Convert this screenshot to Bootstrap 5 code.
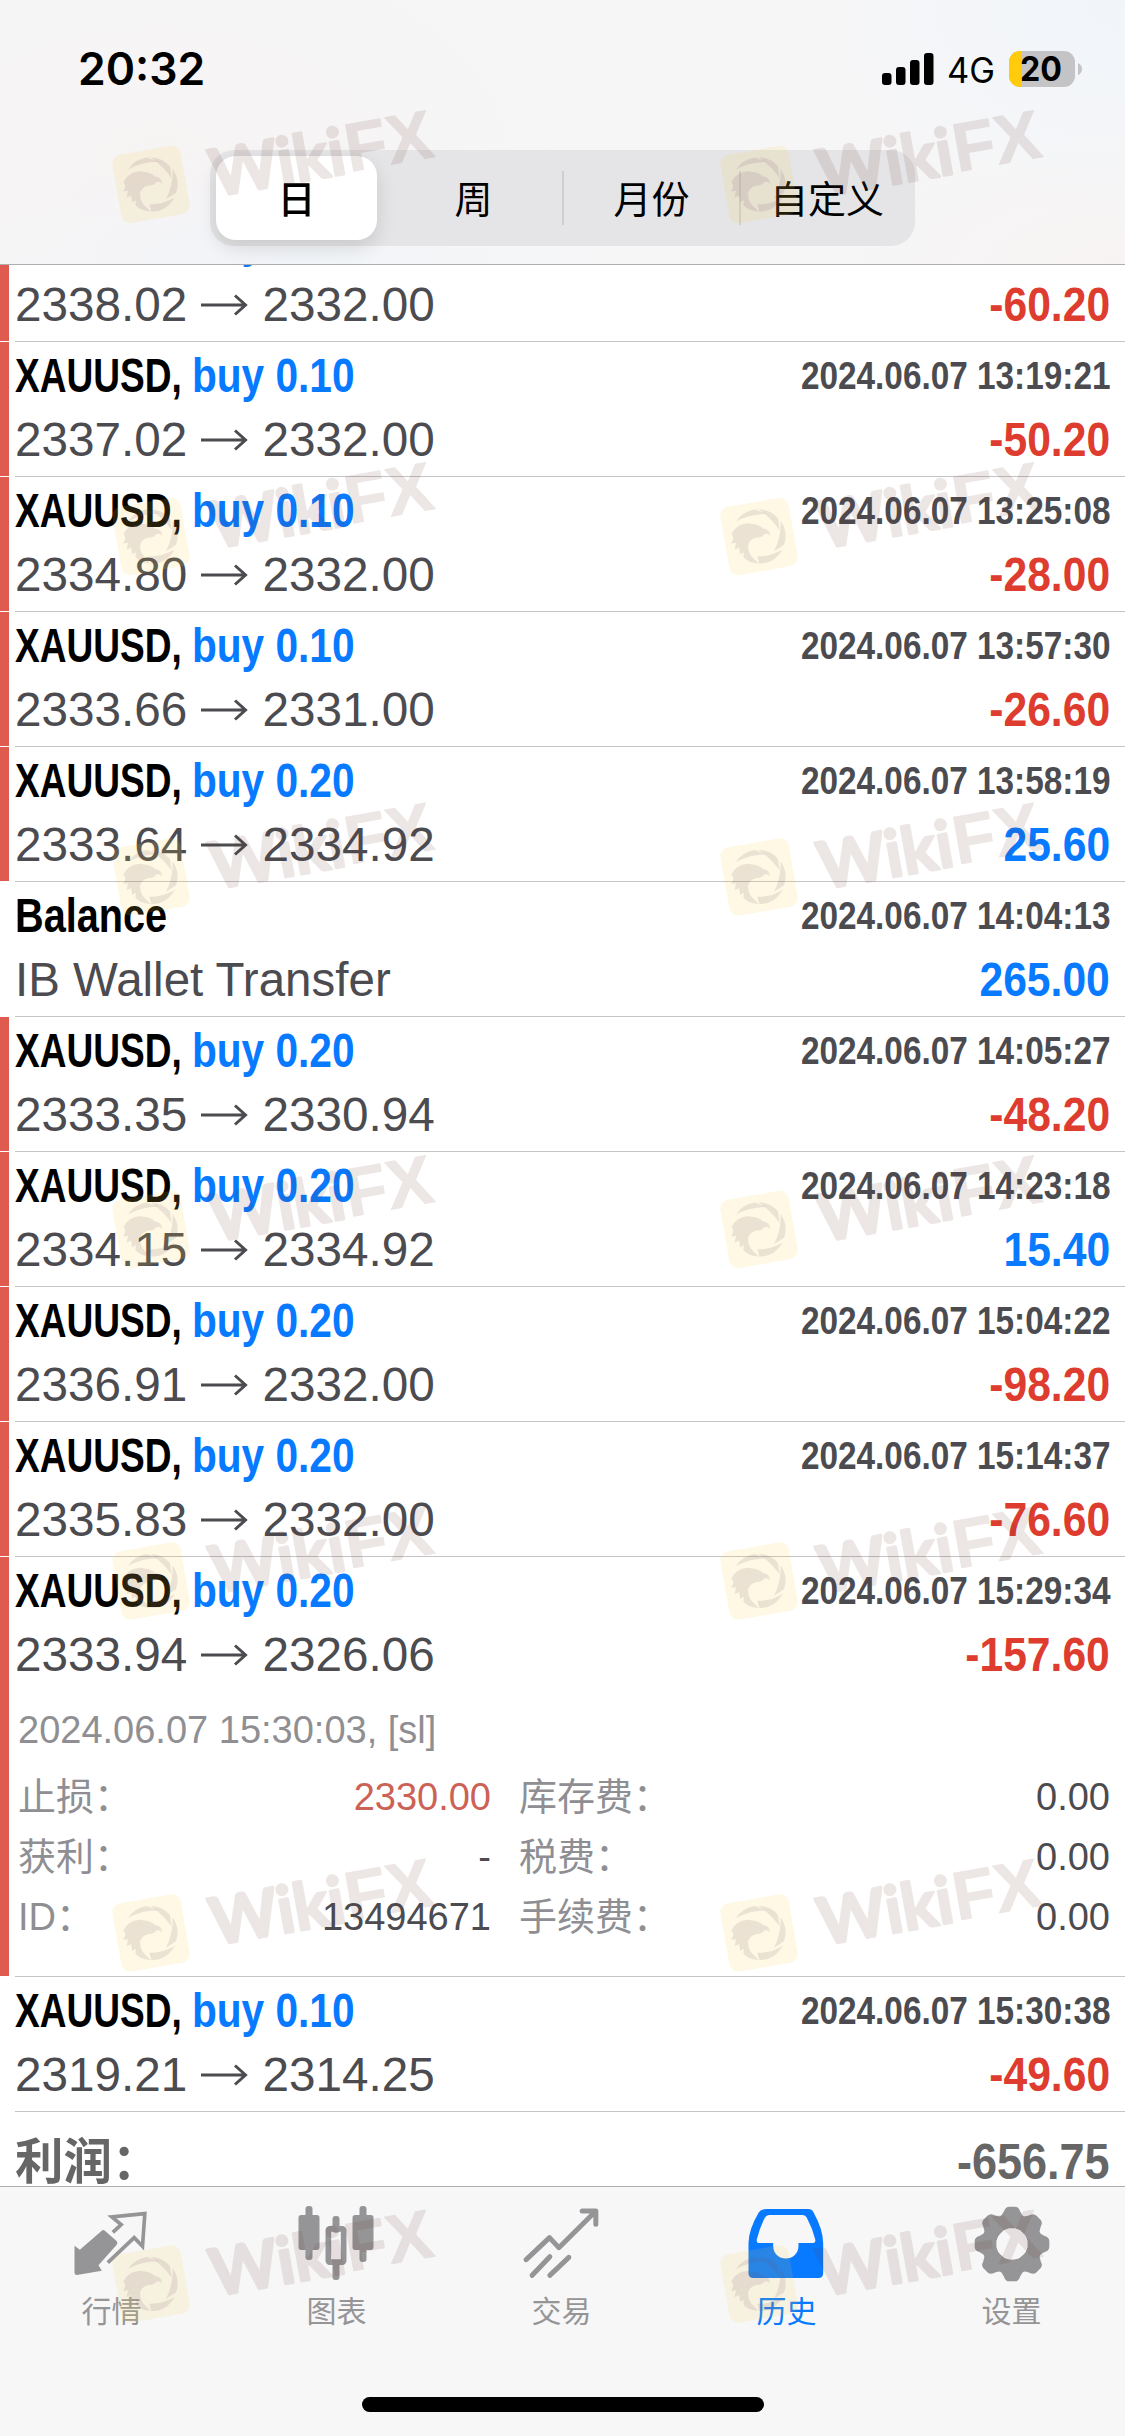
<!DOCTYPE html>
<html lang="zh-CN">
<head>
<meta charset="utf-8">
<meta name="viewport" content="width=device-width, initial-scale=1">
<title>历史</title>
<link href="https://cdn.jsdelivr.net/npm/bootstrap@5.3.0/dist/css/bootstrap.min.css" rel="stylesheet">
<style>
  body{width:1125px;height:2436px;overflow:hidden;background:#fff;color:#4b4b50;font-family:"Liberation Sans","Noto Sans CJK SC",sans-serif}
  .screen{height:2436px}
  .topbar{height:265px;border-bottom:1px solid #aeaeb2;background:
    radial-gradient(300px 220px at 100% 0,rgba(240,245,251,.8),rgba(240,245,251,0)),
    radial-gradient(320px 120px at 26% 100%,rgba(241,245,250,.8),rgba(241,245,250,0)),
    radial-gradient(400px 240px at 14% 60%,rgba(247,243,243,.8),rgba(247,243,243,0)),
    radial-gradient(300px 130px at 100% 100%,rgba(248,243,242,.8),rgba(248,243,242,0)),#f6f6f7}
  .statusbar{height:150px;padding:39px 41px 0 78px}
  .statusbar,.statusbar svg text{font-family:Inter,sans-serif;color:#000}
  .clock{font-size:44.5px;font-weight:600;line-height:60px}
  .seg{width:705px;height:96px;border-radius:24px;background:#e5e5e7;padding:6px 0 6px 6px;margin-left:210px}
  .seg .nav-link{padding:0;color:#000;font:400 38px/81px "Noto Sans CJK SC",sans-serif;text-align:center;height:84px}
  .seg .nav-link.active{background:#fff;color:#000;font-weight:500;border-radius:20px;box-shadow:0 8px 20px rgba(0,0,0,.12)}
  .seg .rule{width:2px;height:54px;background:#cfcfd3}
  .deals{height:1921px;overflow:hidden}
  .deal{height:135px;position:relative;padding:4px 15px 0 15px;flex:none}
  .deal::after{content:"";position:absolute;left:15px;right:0;bottom:0;height:1px;background:#c4c4c7}
  .deal.hit::before{content:"";position:absolute;left:0;top:0;bottom:1px;width:9px;background:#df5b50}
  .deal.open-row{height:420px}
  .first{margin-top:-58px}
  .l1{height:62px;font-weight:700;line-height:60px}
  .l2{height:63px;line-height:63px;font-size:47.7px}
  .sx{display:inline-block;white-space:nowrap;transform-origin:0 50%}
  .sym{width:177px;color:#000;font-size:47.5px}
  .sym .sx{transform:scaleX(.78)}
  .buy{color:#087aff;font-size:47.5px;transform:scaleX(.855)}
  .bal{color:#000;font-size:47.5px;transform:scaleX(.835)}
  .when{font-size:38.5px;line-height:59px;transform:scaleX(.866);transform-origin:100% 50%}
  .amt{font-weight:700;font-size:48px;color:#dd3c2e;transform:scaleX(.888);transform-origin:100% 50%}
  .amt.up{color:#087aff}
  .arrow{width:48px;height:26px;margin:0 14px 0 13px}
  .ibt{font-size:47.5px}
  .detail{font-size:38px;color:#8f8f93;padding-top:18px}
  .detail .stamp{height:52px;line-height:52px;padding-left:3px}
  .grid{padding-top:11px;margin-left:3px}
  .grid>div{height:60px;line-height:60px}
  .gl{width:473px;margin-right:28px}
  .dk{color:#4b4b50}.rd{color:#cc6156}
  .total{height:74px;padding:0 15px;font-weight:700;color:#666;font-size:50px;line-height:100px}
  .total .lab{font:700 48.5px/92px "Noto Sans CJK SC",sans-serif}
  .total .sum{transform:scaleX(.9);transform-origin:100% 50%}
  .tabs{height:250px;border-top:1px solid #adadb0;background:#f7f7f8}
  .tabs .nav-link{width:225px;padding:18px 2px 0 0;color:#959597;font:400 30px/46px "Noto Sans CJK SC",sans-serif}
  .tabs .nav-link.on{color:#087aff}
  .tabs svg{width:78px;height:78px;margin-bottom:3px}
  .homebar{width:402px;height:15px;border-radius:8px;background:#000;margin:65px auto 0}
  .wm{left:0;top:0;pointer-events:none}
</style>
</head>
<body>
<svg width="0" height="0" class="position-absolute">
  <symbol id="ar" viewBox="0 0 48 26"><path d="M1 13H46M35 3.500L45.500 13L35 22.500" fill="none" stroke="#4b4b50" stroke-width="3"/></symbol>
</svg>
<div class="screen d-flex flex-column position-relative">
  <header class="topbar flex-shrink-0">
    <div class="statusbar d-flex justify-content-between align-items-start">
      <span class="clock">20:32</span>
      <svg width="206" height="60" viewBox="0 0 206 60">
        <g><rect x="4" y="34" width="9.500" height="12" rx="3"/><rect x="18" y="28" width="9.500" height="18" rx="3"/><rect x="32" y="21" width="9.500" height="25" rx="3"/><rect x="46" y="14" width="9.500" height="32" rx="3"/></g>
        <text x="69" y="44" font-size="35" textLength="48" lengthAdjust="spacingAndGlyphs">4G</text>
        <clipPath id="bat"><rect x="131" y="12" width="66" height="36" rx="11"/></clipPath>
        <g clip-path="url(#bat)"><rect x="131" y="12" width="66" height="36" fill="#c4c4c6"/><rect x="131" y="12" width="13" height="36" fill="#ffcb0a"/></g>
        <path d="M200 24Q204 26 204 30Q204 34 200 36Z" fill="#c4c4c6"/>
        <text x="142" y="42" font-size="33.500" font-weight="700" textLength="42" lengthAdjust="spacingAndGlyphs">20</text>
      </svg>
    </div>
    <nav class="seg nav d-flex align-items-center">
      <a class="nav-link active" style="width:161px">日</a>
      <a class="nav-link" style="width:185px;padding-left:8px">周</a>
      <span class="rule"></span>
      <a class="nav-link" style="width:175px">月份</a>
      <span class="rule"></span>
      <a class="nav-link" style="width:172px">自定义</a>
    </nav>
  </header>

  <main class="deals d-flex flex-column flex-shrink-0">
    <div class="deal hit first">
      <div class="l1 d-flex"><span class="sym"><span class="sx">XAUUSD,</span></span><span class="sx buy">buy 0.10</span></div>
      <div class="l2 d-flex align-items-center"><span>2338.02</span><svg class="arrow"><use href="#ar"/></svg><span>2332.00</span><span class="sx amt ms-auto">-60.20</span></div>
    </div>
    <div class="deal hit">
      <div class="l1 d-flex"><span class="sym"><span class="sx">XAUUSD,</span></span><span class="sx buy">buy 0.10</span><span class="sx when ms-auto">2024.06.07 13:19:21</span></div>
      <div class="l2 d-flex align-items-center"><span>2337.02</span><svg class="arrow"><use href="#ar"/></svg><span>2332.00</span><span class="sx amt ms-auto">-50.20</span></div>
    </div>
    <div class="deal hit">
      <div class="l1 d-flex"><span class="sym"><span class="sx">XAUUSD,</span></span><span class="sx buy">buy 0.10</span><span class="sx when ms-auto">2024.06.07 13:25:08</span></div>
      <div class="l2 d-flex align-items-center"><span>2334.80</span><svg class="arrow"><use href="#ar"/></svg><span>2332.00</span><span class="sx amt ms-auto">-28.00</span></div>
    </div>
    <div class="deal hit">
      <div class="l1 d-flex"><span class="sym"><span class="sx">XAUUSD,</span></span><span class="sx buy">buy 0.10</span><span class="sx when ms-auto">2024.06.07 13:57:30</span></div>
      <div class="l2 d-flex align-items-center"><span>2333.66</span><svg class="arrow"><use href="#ar"/></svg><span>2331.00</span><span class="sx amt ms-auto">-26.60</span></div>
    </div>
    <div class="deal hit">
      <div class="l1 d-flex"><span class="sym"><span class="sx">XAUUSD,</span></span><span class="sx buy">buy 0.20</span><span class="sx when ms-auto">2024.06.07 13:58:19</span></div>
      <div class="l2 d-flex align-items-center"><span>2333.64</span><svg class="arrow"><use href="#ar"/></svg><span>2334.92</span><span class="sx amt up ms-auto">25.60</span></div>
    </div>
    <div class="deal">
      <div class="l1 d-flex"><span class="sx bal">Balance</span><span class="sx when ms-auto">2024.06.07 14:04:13</span></div>
      <div class="l2 d-flex align-items-center"><span class="sx ibt">IB Wallet Transfer</span><span class="sx amt up ms-auto">265.00</span></div>
    </div>
    <div class="deal hit">
      <div class="l1 d-flex"><span class="sym"><span class="sx">XAUUSD,</span></span><span class="sx buy">buy 0.20</span><span class="sx when ms-auto">2024.06.07 14:05:27</span></div>
      <div class="l2 d-flex align-items-center"><span>2333.35</span><svg class="arrow"><use href="#ar"/></svg><span>2330.94</span><span class="sx amt ms-auto">-48.20</span></div>
    </div>
    <div class="deal hit">
      <div class="l1 d-flex"><span class="sym"><span class="sx">XAUUSD,</span></span><span class="sx buy">buy 0.20</span><span class="sx when ms-auto">2024.06.07 14:23:18</span></div>
      <div class="l2 d-flex align-items-center"><span>2334.15</span><svg class="arrow"><use href="#ar"/></svg><span>2334.92</span><span class="sx amt up ms-auto">15.40</span></div>
    </div>
    <div class="deal hit">
      <div class="l1 d-flex"><span class="sym"><span class="sx">XAUUSD,</span></span><span class="sx buy">buy 0.20</span><span class="sx when ms-auto">2024.06.07 15:04:22</span></div>
      <div class="l2 d-flex align-items-center"><span>2336.91</span><svg class="arrow"><use href="#ar"/></svg><span>2332.00</span><span class="sx amt ms-auto">-98.20</span></div>
    </div>
    <div class="deal hit">
      <div class="l1 d-flex"><span class="sym"><span class="sx">XAUUSD,</span></span><span class="sx buy">buy 0.20</span><span class="sx when ms-auto">2024.06.07 15:14:37</span></div>
      <div class="l2 d-flex align-items-center"><span>2335.83</span><svg class="arrow"><use href="#ar"/></svg><span>2332.00</span><span class="sx amt ms-auto">-76.60</span></div>
    </div>
    <div class="deal hit open-row">
      <div class="l1 d-flex"><span class="sym"><span class="sx">XAUUSD,</span></span><span class="sx buy">buy 0.20</span><span class="sx when ms-auto">2024.06.07 15:29:34</span></div>
      <div class="l2 d-flex align-items-center"><span>2333.94</span><svg class="arrow"><use href="#ar"/></svg><span>2326.06</span><span class="sx amt ms-auto">-157.60</span></div>
      <div class="detail"><div class="stamp">2024.06.07 15:30:03, [sl]</div>
        <div class="grid">
          <div class="d-flex"><div class="gl d-flex justify-content-between"><span>止损：</span><span class="rd">2330.00</span></div><span>库存费：</span><span class="dk ms-auto">0.00</span></div>
          <div class="d-flex"><div class="gl d-flex justify-content-between"><span>获利：</span><span class="dk">-</span></div><span>税费：</span><span class="dk ms-auto">0.00</span></div>
          <div class="d-flex"><div class="gl d-flex justify-content-between"><span>ID：</span><span class="dk">13494671</span></div><span>手续费：</span><span class="dk ms-auto">0.00</span></div>
        </div>
      </div>
    </div>
    <div class="deal">
      <div class="l1 d-flex"><span class="sym"><span class="sx">XAUUSD,</span></span><span class="sx buy">buy 0.10</span><span class="sx when ms-auto">2024.06.07 15:30:38</span></div>
      <div class="l2 d-flex align-items-center"><span>2319.21</span><svg class="arrow"><use href="#ar"/></svg><span>2314.25</span><span class="sx amt ms-auto">-49.60</span></div>
    </div>
    <div class="total d-flex justify-content-between"><span class="lab">利润：</span><span class="sx sum">-656.75</span></div>
  </main>

  <footer class="tabs flex-shrink-0">
    <nav class="nav flex-nowrap">
      <a class="nav-link d-flex flex-column align-items-center"><svg viewBox="100.500 75 234 234" fill="#959597"><path d="M105 197L121 209L186 153Q191 148 196 152L232 184Q236 190 231 195L177 256L187 272L112 285Q105 285 105 278Z"/><path d="M220 157L245 134L217 111L316 101L309 199L284 173L205 248" fill="none" stroke="#959597" stroke-width="11"/></svg>行情</a>
      <a class="nav-link d-flex flex-column align-items-center"><svg viewBox="775.500 75 234 234" fill="#959597"><rect x="777" y="105" width="63" height="105" rx="8"/><rect x="798" y="78" width="21" height="162" rx="9"/><rect x="879" y="108" width="21" height="50" rx="9"/><rect x="879" y="240" width="21" height="60" rx="9"/><rect x="866.500" y="146.500" width="46" height="100" rx="4" fill="none" stroke="#959597" stroke-width="17"/><rect x="939" y="105" width="63" height="105" rx="8"/><rect x="960" y="78" width="21" height="168" rx="9"/></svg>图表</a>
      <a class="nav-link d-flex flex-column align-items-center"><svg viewBox="130.500 75 234 234" fill="none" stroke="#959597" stroke-width="15" stroke-linecap="round" stroke-linejoin="round"><path d="M140 239L210 173L238 203L346 96M308 93H349V133"/><path d="M211 230L158 286M268 232L211 286" /></svg>交易</a>
      <a class="nav-link on d-flex flex-column align-items-center"><svg viewBox="805.500 75 234 234" fill="#087aff" fill-rule="evenodd"><path d="M862 87H986Q997 87 1002 97Q1031 150 1031 190V280Q1031 294 1017 294H821Q807 294 807 280V190Q807 150 838 97Q845 87 862 87ZM869 105Q860 105 856 113Q840 145 832 178Q830 189 840 189H881V197C881 248 957 248 957 197V189H1000Q1010 189 1007 178Q999 145 982 113Q978 105 970 105Z"/></svg>历史</a>
      <a class="nav-link d-flex flex-column align-items-center"><svg viewBox="-117 -117 234 234"><defs><path id="tooth" d="M-40 -78Q-29 -86 -24 -98Q-20 -112 -8 -112H8Q20 -112 24 -98Q29 -86 40 -78L0 -40Z"/></defs><g fill="#959597"><use href="#tooth"/><use href="#tooth" transform="rotate(45)"/><use href="#tooth" transform="rotate(90)"/><use href="#tooth" transform="rotate(135)"/><use href="#tooth" transform="rotate(180)"/><use href="#tooth" transform="rotate(225)"/><use href="#tooth" transform="rotate(270)"/><use href="#tooth" transform="rotate(315)"/></g><circle r="66" fill="none" stroke="#959597" stroke-width="38"/><circle r="47" fill="#f7f7f8"/></svg>设置</a>
    </nav>
    <div class="homebar"></div>
  </footer>

  <svg class="wm position-absolute" width="1125" height="2436" viewBox="0 0 1125 2436">
    <defs>
      <g id="mk">
        <g transform="scale(.33333)">
          <rect x="-104" y="-104" width="208" height="208" rx="28" transform="rotate(-10)" fill="#facd46" fill-opacity=".14"/>
          <g transform="translate(-181 -259)" fill="#695066" fill-opacity=".13">
            <path d="M112 214Q132 184 168 178L204 191Q150 192 112 214Z"/>
            <path d="M180 177Q218 180 238 205L243 240Q222 208 180 177Z"/>
            <path d="M246 212Q270 248 256 284L226 303Q248 262 246 212Z"/>
            <path d="M252 298Q226 342 182 340L176 318Q214 320 252 298Z"/>
            <path d="M99 250Q112 222 148 219Q182 222 194 235Q213 238 215 257Q206 248 196 252Q190 262 175 262Q152 266 148 286Q148 312 168 328L180 340Q146 338 134 320L136 306L124 312L122 292L108 298L112 278L98 280L104 264Z"/>
          </g>
          <g transform="rotate(-10)" fill="#693732" stroke="#693732" stroke-width="8" stroke-linejoin="round" opacity=".12" font-family="Lato,sans-serif" font-weight="700" font-size="196">
            <text x="180" y="70" textLength="408" lengthAdjust="spacing">Wiki</text>
            <text x="592" y="66" font-family="Liberation Sans,sans-serif" stroke-width="3" font-size="206" textLength="264" lengthAdjust="spacing">FX</text>
          </g>
        </g>
      </g>
    </defs>
    <use href="#mk" x="151" y="184.500"/><use href="#mk" x="759" y="184.500"/>
    <use href="#mk" x="151" y="536.500"/><use href="#mk" x="759" y="536.500"/>
    <use href="#mk" x="151" y="877"/><use href="#mk" x="759" y="877"/>
    <use href="#mk" x="151" y="1229.500"/><use href="#mk" x="759" y="1229.500"/>
    <use href="#mk" x="151" y="1581"/><use href="#mk" x="759" y="1581"/>
    <use href="#mk" x="151" y="1933"/><use href="#mk" x="759" y="1933"/>
    <use href="#mk" x="151" y="2284"/><use href="#mk" x="759" y="2284"/>
  </svg>
</div>
<script src="https://cdn.jsdelivr.net/npm/bootstrap@5.3.0/dist/js/bootstrap.bundle.min.js"></script>
</body>
</html>
